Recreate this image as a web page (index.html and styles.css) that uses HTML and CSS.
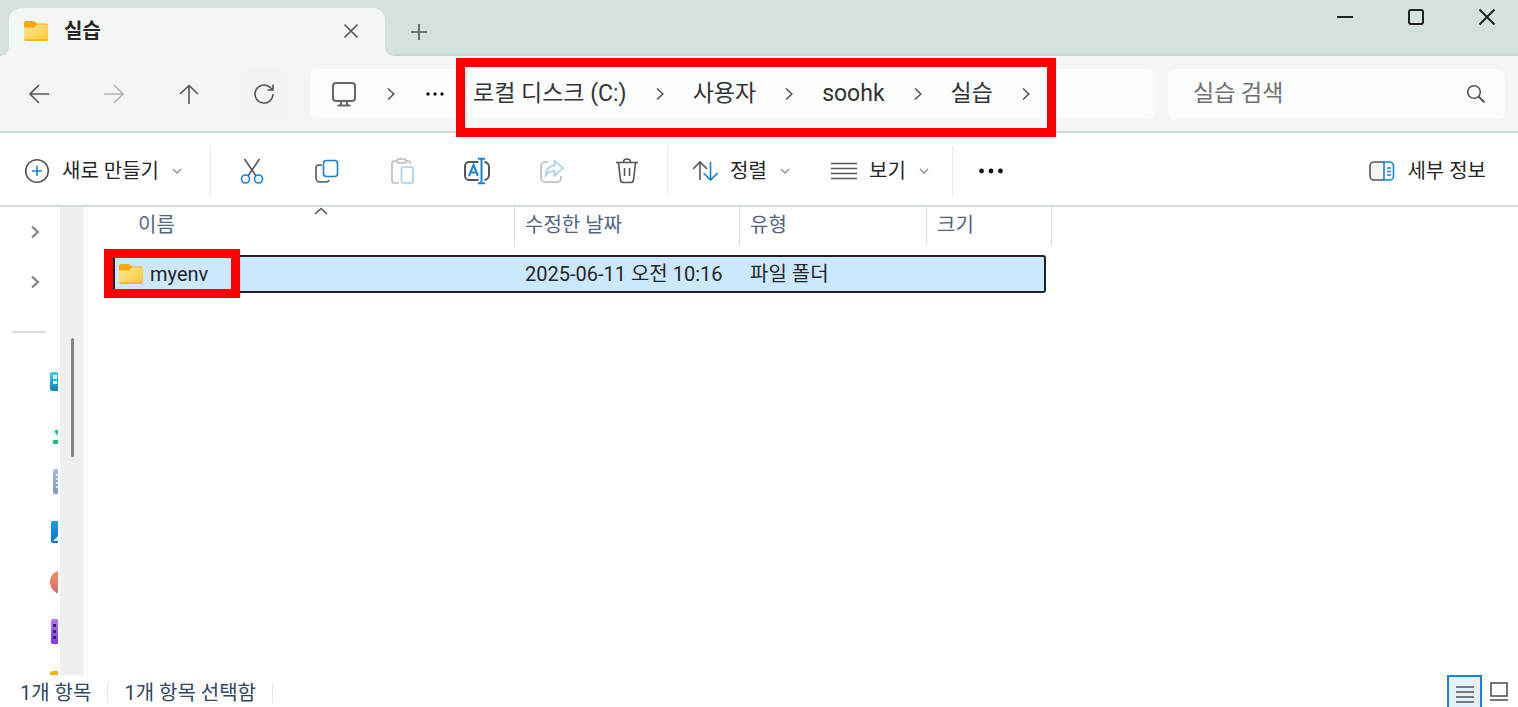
FILE: index.html
```html
<!DOCTYPE html>
<html lang="ko">
<head>
<meta charset="utf-8">
<title>실습</title>
<link rel="stylesheet" href="styles.css">
</head>
<body>
<svg class="defs" aria-hidden="true">
  <defs>
    <linearGradient id="folder-front" x1="0" y1="0" x2="1" y2="1">
      <stop offset="0" stop-color="#ffe699"/><stop offset="1" stop-color="#fcc631"/>
    </linearGradient>
    <linearGradient id="teal" x1="0" y1="0" x2="0" y2="1">
      <stop offset="0" stop-color="#3fd6ea"/><stop offset="1" stop-color="#0b7fb5"/>
    </linearGradient>
    <linearGradient id="slate" x1="0" y1="0" x2="0" y2="1">
      <stop offset="0" stop-color="#a9bcd6"/><stop offset="1" stop-color="#7f9ac2"/>
    </linearGradient>
    <linearGradient id="blue" x1="0" y1="0" x2="0" y2="1">
      <stop offset="0" stop-color="#14a0e6"/><stop offset="1" stop-color="#0c6fc4"/>
    </linearGradient>
    <linearGradient id="coral" x1="0" y1="0" x2="0" y2="1">
      <stop offset="0" stop-color="#f58f5c"/><stop offset="1" stop-color="#d96b6b"/>
    </linearGradient>
    <linearGradient id="violet" x1="0" y1="0" x2="0" y2="1">
      <stop offset="0" stop-color="#b87bf5"/><stop offset="1" stop-color="#8438e6"/>
    </linearGradient>
    <symbol id="folder" viewBox="0 0 26 22">
      <path d="M1 3a2 2 0 0 1 2-2h7c1 0 1.600.4 2.200 1l1.800 1.500h9a2 2 0 0 1 2 2V16H1z" fill="#f2aa0c"/>
      <path d="M1 7.500h10.500l2.500-3h9a2 2 0 0 1 2 2V19a2 2 0 0 1-2 2H3a2 2 0 0 1-2-2z" fill="url(#folder-front)"/>
      <path d="M1.500 20h23" stroke="#eeb02a" stroke-width="1.500"/>
    </symbol>
    <symbol id="chevron" viewBox="0 0 12 16"><path d="M3 2.500L8.800 8 3 13.500"/></symbol>
    <symbol id="down" viewBox="0 0 12 8"><path d="M2 2l4 4 4-4"/></symbol>
  </defs>
</svg>

<div class="window">
  <header class="titlebar">
    <div class="tab">
      <svg class="folder"><use href="#folder"/></svg>
      <span class="tab-title">실습</span>
      <button class="plain tab-close" aria-label="탭 닫기"><svg class="icon" width="16" height="16"><path d="M1.500 1.500l13 13m0-13l-13 13"/></svg></button>
    </div>
    <button class="plain tab-new" aria-label="새 탭"><svg class="icon" width="18" height="18"><path d="M9 1v16M1 9h16"/></svg></button>
    <div class="controls">
      <button class="plain" aria-label="최소화"><svg class="icon dark" width="18" height="18"><path d="M1 9h16"/></svg></button>
      <button class="plain" aria-label="최대화"><svg class="icon dark" width="18" height="18"><rect x="2" y="2" width="14" height="14" rx="2"/></svg></button>
      <button class="plain" aria-label="닫기"><svg class="icon dark" width="18" height="18"><path d="M1.500 1.500l15 15m0-15l-15 15"/></svg></button>
    </div>
  </header>

  <nav class="navbar">
    <div class="history">
      <button class="plain" aria-label="뒤로"><svg class="icon" width="22" height="20"><path d="M21 10H2m9-9l-9 9 9 9"/></svg></button>
      <button class="plain" aria-label="앞으로" disabled><svg class="icon" width="22" height="20"><path d="M1 10h19m-9-9l9 9-9 9"/></svg></button>
      <button class="plain" aria-label="위로"><svg class="icon" width="20" height="20"><path d="M10 20V1.500M1 10l9-8.500 9 8.500"/></svg></button>
      <button class="plain refresh" aria-label="새로 고침"><svg class="icon" width="22" height="22"><path d="M20 11a9 9 0 1 1-3.500-7.100L19.500 6.500M20 1.500v5.500h-5.500"/></svg></button>
    </div>
    <div class="address">
      <button class="plain" aria-label="내 PC"><svg class="icon pc" width="26" height="26"><rect x="2" y="2" width="22" height="18" rx="3"/><path d="M10 20v4m6-4v4M6.500 24.500h13"/></svg></button>
      <svg class="icon" width="12" height="16"><use href="#chevron"/></svg>
      <button class="plain" aria-label="상위 폴더"><svg class="dots" width="20" height="6"><circle cx="3" cy="3" r="1.700"/><circle cx="10" cy="3" r="1.700"/><circle cx="17" cy="3" r="1.700"/></svg></button>
      <div class="crumbs">
        <a href="#c">로컬 디스크 (C:)</a>
        <svg class="icon" width="12" height="16"><use href="#chevron"/></svg>
        <a href="#users">사용자</a>
        <svg class="icon" width="12" height="16"><use href="#chevron"/></svg>
        <a href="#soohk">soohk</a>
        <svg class="icon" width="12" height="16"><use href="#chevron"/></svg>
        <a href="#practice">실습</a>
        <svg class="icon" width="12" height="16"><use href="#chevron"/></svg>
      </div>
    </div>
    <label class="search">
      <input type="text" placeholder="실습 검색" aria-label="실습 검색">
      <svg class="icon" width="20" height="20"><circle cx="8" cy="8" r="6.300"/><path d="M12.500 12.500l6 6" stroke-width="2"/></svg>
    </label>
  </nav>

  <div class="toolbar">
    <button class="plain tool new">
      <svg class="icon" width="26" height="26"><circle cx="13" cy="13" r="11.300"/><path class="accent" d="M13 8v10M8 13h10"/></svg>
      <span>새로 만들기</span>
      <svg class="icon light" width="12" height="8"><use href="#down"/></svg>
    </button>
    <div class="actions">
      <button class="plain" aria-label="잘라내기"><svg class="icon" width="26" height="28"><path d="M5.500 2L17 19M20.500 2L9 19"/><circle class="accent" cx="6.500" cy="22" r="4"/><circle class="accent" cx="19.500" cy="22" r="4"/></svg></button>
      <button class="plain" aria-label="복사"><svg class="icon" width="26" height="26"><path d="M8 7H5a3 3 0 0 0-3 3v10a4 4 0 0 0 4 4h6a3 3 0 0 0 3-2"/><rect class="accent" x="9.500" y="2.500" width="14" height="16" rx="3"/></svg></button>
      <button class="plain" aria-label="붙여넣기" disabled><svg class="icon" width="26" height="28"><path d="M8 4H5a2 2 0 0 0-2 2v18a2 2 0 0 0 2 2h5M17 4h2a2 2 0 0 1 2 2v1"/><rect x="8" y="2" width="9" height="4" rx="2"/><rect class="accent" x="12.500" y="10" width="11.500" height="16" rx="2"/></svg></button>
      <button class="plain" aria-label="이름 바꾸기"><svg class="icon rename" width="28" height="28"><path d="M15.500 5H6a4 4 0 0 0-4 4v10a4 4 0 0 0 4 4h9.500M21.500 5a5 5 0 0 1 4.500 5v8a5 5 0 0 1-4.500 5"/><path class="accent" d="M18.500 2v24M15 1.800h7M15 26.200h7M6 19l4.500-11L15 19M7.500 15.500h6"/></svg></button>
      <button class="plain" aria-label="공유" disabled><svg class="icon" width="26" height="26"><path d="M9 4H6a4 4 0 0 0-4 4v12a4 4 0 0 0 4 4h12a4 4 0 0 0 4-4v-2"/><path class="accent" d="M15.500 3l8.500 7-8.500 7.500v-4.500c-4 0-6.500 1-9 4.500.5-6 3.500-9.500 9-10z"/></svg></button>
      <button class="plain" aria-label="삭제"><svg class="icon" width="26" height="28"><path d="M2 5.500h22M9.500 5a3.500 3 0 0 1 7 0M4.500 6l2 17a3 3 0 0 0 3 2.500h7a3 3 0 0 0 3-2.500l2-17M10.500 11v8M15.500 11v8"/></svg></button>
    </div>
    <button class="plain tool sort">
      <svg class="icon" width="26" height="22"><path d="M8 20V2M1 9l7-7 7 7"/><path class="accent" d="M18.500 2v18M11.500 13l7 7 7-7"/></svg>
      <span>정렬</span>
      <svg class="icon light" width="12" height="8"><use href="#down"/></svg>
    </button>
    <button class="plain tool view">
      <svg class="icon" width="26" height="18"><path d="M0 1.500h26M0 6.500h26M0 11.500h26M0 16.500h26"/></svg>
      <span>보기</span>
      <svg class="icon light" width="12" height="8"><use href="#down"/></svg>
    </button>
    <button class="plain more" aria-label="자세히 보기"><svg class="dots" width="26" height="6"><circle cx="3.500" cy="3" r="2.400"/><circle cx="13" cy="3" r="2.400"/><circle cx="22.500" cy="3" r="2.400"/></svg></button>
    <button class="plain tool details">
      <svg class="icon" width="26" height="20"><path d="M15 1H5a4 4 0 0 0-4 4v10a4 4 0 0 0 4 4h10" fill="#f4f4f4"/><path class="accent" d="M15 1h5.500a4 4 0 0 1 4 4v10a4 4 0 0 1-4 4H15zM18 7h4M18 10.500h4M18 14h4"/></svg>
      <span>세부 정보</span>
    </button>
  </div>

  <div class="content">
    <aside class="sidebar">
      <ul class="tree">
        <li><svg class="icon" width="12" height="16"><use href="#chevron"/></svg></li>
        <li><svg class="icon" width="12" height="16"><use href="#chevron"/></svg></li>
        <li class="rule"><hr></li>
        <li class="place"><svg width="10" height="26"><rect x="2" y="3" width="16" height="19" rx="2" fill="url(#teal)"/><path d="M5 6h4v4H5zM5 12h4v3H5z" fill="#e9fbff"/></svg></li>
        <li class="place"><svg width="10" height="26"><path d="M6.500 11.500l4-1v6c-2-1-4-2.500-4-5z" fill="#18c487"/><rect x="5" y="21" width="8" height="4" rx="1" fill="#12bd74"/></svg></li>
        <li class="place"><svg width="10" height="26"><rect x="5" y="0" width="16" height="25" rx="2" fill="url(#slate)"/><path d="M8 6h3M8 10h3M8 14h3M8 18h3" stroke="#f1f5fb" stroke-width="1.500"/></svg></li>
        <li class="place"><svg width="10" height="26"><rect x="3" y="2" width="20" height="22" rx="2" fill="url(#blue)"/><path d="M5 22l6-6v6z" fill="#e4f3ff"/></svg></li>
        <li class="place"><svg width="10" height="26"><circle cx="14" cy="13" r="12" fill="url(#coral)"/></svg></li>
        <li class="place"><svg width="10" height="26"><rect x="3" y="0" width="20" height="25" rx="2" fill="url(#violet)"/><path d="M5 5h3v3H5zM5 11h3v3H5zM5 17h3v3H5z" fill="#3a2560"/></svg></li>
        <li class="place"><svg width="10" height="26"><rect x="2" y="2" width="20" height="20" rx="3" fill="#f7ab05"/></svg></li>
      </ul>
      <div class="scrollbar"><div class="thumb"></div></div>
    </aside>

    <main class="files">
      <table>
        <colgroup><col class="c-name"><col class="c-date"><col class="c-type"><col class="c-size"><col class="c-end"></colgroup>
        <thead>
          <tr>
            <th class="name-head"><button class="plain">이름</button><svg class="icon sort-mark" width="14" height="8"><path d="M1 7l6-5.500L13 7"/></svg></th>
            <th><button class="plain">수정한 날짜</button></th>
            <th><button class="plain">유형</button></th>
            <th colspan="2"><button class="plain">크기</button></th>
          </tr>
        </thead>
        <tbody>
          <tr>
            <td><span class="file"><svg class="folder"><use href="#folder"/></svg>myenv</span></td>
            <td>2025-06-11 오전 10:16</td>
            <td>파일 폴더</td>
            <td></td>
            <td class="end"></td>
          </tr>
        </tbody>
      </table>
    </main>
  </div>

  <footer class="status">
    <span>1개 항목</span>
    <span>1개 항목 선택함</span>
    <div class="modes">
      <button class="plain on" aria-label="자세히"><svg class="icon" width="18" height="20"><path d="M0 3h18M0 8h18M0 13h18M0 18h18"/></svg></button>
      <button class="plain" aria-label="큰 아이콘"><svg class="icon" width="20" height="22"><rect x="2" y="3" width="16" height="13"/><path d="M1 20h18"/></svg></button>
    </div>
  </footer>
</div>
</body>
</html>
```
FILE: styles.css
```css
* { box-sizing: border-box; }

body {
  margin: 0;
  background: #fff;
  color: #262626;
  font: 20px/28px Roboto, "Noto Sans CJK KR", sans-serif;
}

.defs { position: absolute; width: 0; height: 0; }
svg { display: block; flex: none; }

.plain {
  display: flex;
  align-items: center;
  justify-content: center;
  padding: 0;
  border: 0;
  background: none;
  color: inherit;
  font: inherit;
  white-space: nowrap;
}

.icon { fill: none; stroke: #555; stroke-width: 1.6; }
.icon .accent { stroke: #1583dc; }
.icon.dark { stroke: #222; stroke-width: 2; }
.icon.light { stroke: #999; }
.icon.pc { stroke: #666; stroke-width: 2; }
.icon.rename { stroke-width: 2; }
.plain:disabled .icon { opacity: 0.4; }
.dots { fill: #111; }
.folder { width: 26px; height: 22px; }

.window {
  display: flex;
  flex-direction: column;
  height: 100vh;
  overflow: hidden;
}

/* Title bar */
.titlebar {
  display: flex;
  align-items: flex-end;
  flex: none;
  height: 56px;
  padding-left: 9px;
  background: linear-gradient(#d5e1de 54px, #c9d7d3 54px);
}

.tab {
  position: relative;
  display: flex;
  align-items: center;
  width: 376px;
  height: 48px;
  padding: 0 24px 2px 14px;
  border-radius: 12px 12px 0 0;
  background: #f2f6f5;
}

.tab::before,
.tab::after {
  content: "";
  position: absolute;
  bottom: 0;
  width: 8px;
  height: 8px;
}
.tab::before { right: 100%; background: radial-gradient(circle at 0 0, #d5e1de 6px, #c9d7d3 7px, #f2f6f5 8px); }
.tab::after { left: 100%; background: radial-gradient(circle at 100% 0, #d5e1de 6px, #c9d7d3 7px, #f2f6f5 8px); }

.tab-title { margin-left: 15px; font-weight: 700; }
.tab-close { width: 20px; height: 32px; margin-left: auto; }
.tab-new { width: 48px; height: 48px; margin-left: 10px; }

.controls {
  display: flex;
  align-self: flex-start;
  gap: 9px;
  margin-left: auto;
}
.controls .plain { width: 62px; height: 34px; }

/* Navigation */
.navbar {
  display: flex;
  flex: none;
  padding: 13px 13px 12px 14px;
  border-bottom: 2px solid #d0dcd9;
  background: #f2f6f5;
}

.history { display: flex; gap: 25px; margin-right: 21px; }
.history .plain { width: 50px; height: 50px; border-radius: 6px; }
.history .refresh { background: #f0f4f3; }

.address,
.search {
  display: flex;
  align-items: center;
  height: 50px;
  border-radius: 7px;
  background: #fbfdfc;
  font-size: 23px;
}

.address { flex: 1; min-width: 0; gap: 28px; padding-left: 21px; }

.crumbs {
  position: relative;
  display: flex;
  align-items: center;
  gap: 27px;
  height: 50px;
  white-space: nowrap;
}
.crumbs::after {
  content: "";
  position: absolute;
  inset: -11px -24px -18px -17px;
  z-index: 2;
  border: 9px solid #f00;
}
.crumbs a { color: #333; text-decoration: none; }

.search { width: 337px; margin-left: 13px; padding: 0 19px 0 25px; }
.search input {
  flex: 1;
  min-width: 0;
  padding: 0;
  border: 0;
  outline: 0;
  background: none;
  font: inherit;
}
.search input::placeholder { color: #707070; opacity: 1; }

/* Command bar */
.toolbar {
  display: flex;
  align-items: center;
  flex: none;
  height: 74px;
  padding-top: 3px;
  border-bottom: 2px solid #d2dcda;
}
.toolbar > * { height: 50px; border-right: 1px solid #e9e9e9; }
.tool { justify-content: flex-start; gap: 12px; padding-left: 24px; }
.new { width: 211px; }
.actions { display: flex; padding: 0 3px; }
.actions .plain { width: 75px; }
.toolbar .sort { width: 139px; border-right: 0; }
.view { width: 146px; }
.toolbar .more { width: 75px; border-right: 0; }
.toolbar .details { margin-left: auto; padding-right: 32px; border-right: 0; }

/* Content */
.content { display: flex; flex: 1; min-height: 0; }

.sidebar {
  display: flex;
  flex: none;
  width: 88px;
  overflow: hidden;
  border-right: 1px solid #f3f3f3;
}
.tree { width: 58px; margin: 0 2px 0 0; padding: 0; overflow: hidden; list-style: none; }
.tree li { display: flex; align-items: center; height: 50px; padding-left: 29px; }
.tree .icon { stroke: #858585; stroke-width: 2.4; }
.tree .rule { padding: 0 0 0 12px; }
.tree hr { width: 34px; margin: 0; border: 0; border-top: 2px solid #dcdcdc; }
.tree .place { padding-left: 48px; }
.scrollbar { width: 24px; padding: 131px 10px 0 11px; background: #efefef; }
.thumb { height: 119px; border-radius: 2px; background: #858585; }

.files { flex: 1; min-width: 0; padding-left: 25px; }

table { width: 939px; table-layout: fixed; border-collapse: separate; border-spacing: 0; }
.c-name { width: 402px; }
.c-date { width: 225px; }
.c-type { width: 187px; }
.c-size { width: 119px; }
.c-end { width: 6px; }

th {
  height: 39px;
  padding: 0 0 3px 10px;
  border-right: 1px solid #dedede;
  color: #52657f;
  font-weight: 400;
}
.name-head { position: relative; padding-left: 25px; }
.sort-mark { position: absolute; top: 0; left: 50%; }

tbody::before { content: ""; display: block; height: 9px; }
td {
  height: 38px;
  padding: 0 0 0 10px;
  border: 0 solid #222;
  border-width: 2px 0;
  background: #cce8ff;
  white-space: nowrap;
}
td:first-child { padding: 0; border-left-width: 2px; }
td:nth-child(4) { border-right-width: 2px; border-radius: 0 3px 3px 0; }
td.end { padding: 0; border: 0; background: none; }

.file {
  position: relative;
  display: flex;
  align-items: center;
  gap: 6px;
  width: 125px;
  height: 34px;
  padding-left: 3px;
}
.file::after {
  content: "";
  position: absolute;
  inset: -8px 0 -7px -11px;
  z-index: 2;
  border: 9px solid #f00;
}

/* Status bar */
.status {
  display: flex;
  align-items: center;
  flex: none;
  height: 32px;
  padding: 0 9px 0 4px;
  color: #33475f;
}
.status > span { margin-top: 4px; padding: 0 16px; border-right: 1px solid #e6e6e6; line-height: 20px; }
.modes { display: flex; gap: 7px; height: 32px; margin-left: auto; }
.modes .on { width: 35px; padding-top: 4px; border: 2px solid #1583dc; border-bottom: 0; background: #e5f2fb; }
```
